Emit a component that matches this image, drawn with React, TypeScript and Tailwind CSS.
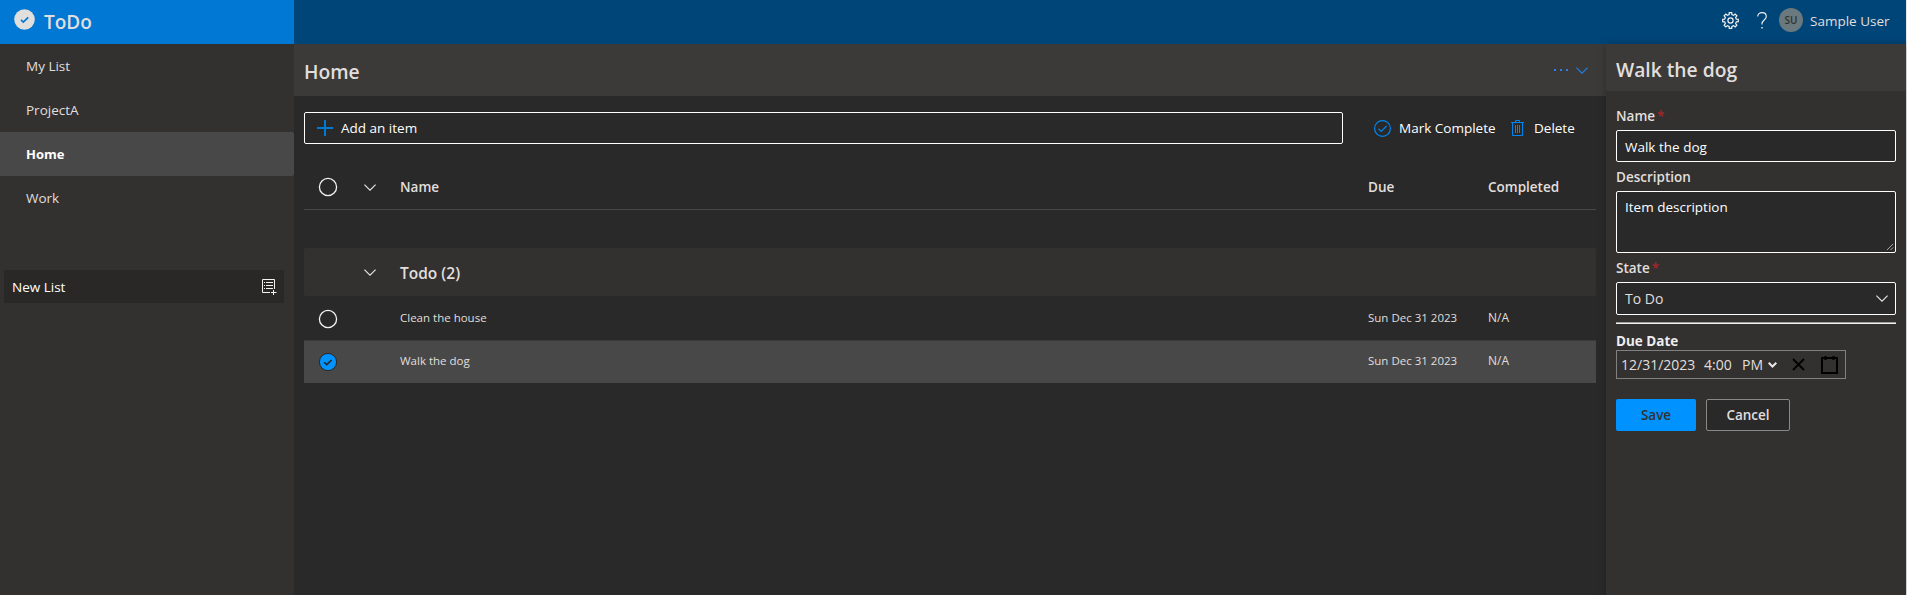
import type { ReactNode } from "react";

const lists = ["My List", "ProjectA", "Home", "Work"];

const items = [
  { name: "Clean the house", due: "Sun Dec 31 2023", completed: "N/A", selected: false },
  { name: "Walk the dog", due: "Sun Dec 31 2023", completed: "N/A", selected: true },
];

function gearPath(teeth: number, outer: number, inner: number) {
  const step = (Math.PI * 2) / teeth;
  const points: string[] = [];
  for (let i = 0; i < teeth; i++) {
    const a = i * step - Math.PI / 2;
    [
      [a - step * 0.3, inner],
      [a - step * 0.2, outer],
      [a + step * 0.2, outer],
      [a + step * 0.3, inner],
    ].forEach(([angle, r]) => {
      points.push(`${(8.5 + r * Math.cos(angle)).toFixed(2)} ${(8.5 + r * Math.sin(angle)).toFixed(2)}`);
    });
  }
  return `M${points.join("L")}Z`;
}

function GearIcon() {
  return (
    <svg width="17" height="17" viewBox="0 0 17 17" fill="none" stroke="#f3f2f1" strokeWidth="1.2">
      <path d={gearPath(8, 7.9, 6)} />
      <circle cx="8.5" cy="8.5" r="2.6" />
    </svg>
  );
}

function HelpIcon() {
  return (
    <svg width="10" height="17" viewBox="0 0 10 17" fill="none" stroke="#f3f2f1" strokeWidth="1.1">
      <path d="M0.7 4.6C0.7 2.3 2.6 0.6 5 0.6s4.3 1.6 4.3 3.9c0 3.3-4.3 3.7-4.3 7.1v1" />
      <path d="M5 15v1.6" strokeWidth="1.4" />
    </svg>
  );
}

function Chevron({ color = "#e1dfdd", width = 12, height = 7 }: { color?: string; width?: number; height?: number }) {
  return (
    <svg width={width} height={height} viewBox="0 0 12 7" fill="none" stroke={color} strokeWidth="1.2">
      <path d="M0.4 0.6L6 6.2L11.6 0.6" />
    </svg>
  );
}

function NewListIcon() {
  return (
    <svg width="15" height="16" viewBox="0 0 15 16" fill="none" stroke="#f3f2f1">
      <path d="M8 13.5H0.5V0.5H12.5V10" />
      <path d="M2 3.5h1M2 6.5h1M2 9.5h1M4 3.5h7M4 6.5h7M4 9.5h7" />
      <path d="M9 13.5h5.5M11.5 11v5" />
    </svg>
  );
}

function SelectCircle({ checked = false }: { checked?: boolean }) {
  return (
    <svg width="20" height="20" viewBox="0 0 20 20" fill="none">
      {checked ? (
        <>
          <circle cx="10" cy="10" r="8.6" fill="#0092ff" stroke="#292827" strokeWidth="1" />
          <path d="M6.2 10.4L8.8 12.6L13.6 8" stroke="#292827" strokeWidth="1.6" />
        </>
      ) : (
        <circle cx="10" cy="10" r="8.6" stroke="#f3f2f1" strokeWidth="1.3" />
      )}
    </svg>
  );
}

function Label({ children, required }: { children: ReactNode; required?: boolean }) {
  return (
    <div className="flex h-[20px] items-center text-[13.5px] font-semibold leading-[20px]">
      <span>{children}</span>
      {required && <span className="pl-[2px] text-[#a4262c]">*</span>}
    </div>
  );
}

function Header() {
  return (
    <header className="flex h-11 shrink-0 bg-[#004578]">
      <div className="flex w-[294px] items-center bg-[#0078d4] pl-[14px]">
        <svg width="21" height="21" viewBox="0 0 21 21" fill="none" className="mb-[5px]">
          <circle cx="10.5" cy="10.5" r="10.3" fill="#e1dfdd" />
          <path d="M7 10.8L9.3 13L14.2 8.3" stroke="#0078d4" strokeWidth="1.7" />
        </svg>
        <span className="pl-[9px] text-[19px] font-semibold leading-[44px] text-[#e1dfdd]">ToDo</span>
      </div>
      <div className="flex grow items-center justify-end pb-1 pr-[17px]">
        <GearIcon />
        <div className="pl-[18px]">
          <HelpIcon />
        </div>
        <div className="ml-[12px] flex size-6 items-center justify-center rounded-full bg-[#69797e] text-[10px] font-semibold text-[#323130]">
          SU
        </div>
        <span className="w-[86px] whitespace-nowrap pl-[7px] pt-[2px] text-[13.5px]">Sample User</span>
      </div>
    </header>
  );
}

function Sidebar() {
  return (
    <nav className="w-[294px] shrink-0 bg-[#323130] text-[13.5px]">
      {lists.map((name) => (
        <div
          key={name}
          className={
            name === "Home"
              ? "h-11 rounded-r-[2px] bg-[#484848] pl-[26px] text-[13px] font-bold leading-[44px] text-white"
              : "h-11 pl-[26px] leading-[44px]"
          }
        >
          {name}
        </div>
      ))}
      <div className="ml-1 mt-[50px] flex h-[33px] w-[280px] items-center justify-between rounded-[2px] bg-[#292827] pl-2 pr-[7px]">
        <span className="pt-px text-white">New List</span>
        <NewListIcon />
      </div>
    </nav>
  );
}

function Main() {
  return (
    <main className="flex min-w-0 grow flex-col bg-[#292929]">
      <div className="flex h-[52px] items-center justify-between bg-[#3b3a39] pl-[10px] pr-[18px]">
        <h1 className="pt-[4px] text-[19.25px] font-semibold leading-[28px]">Home</h1>
        <div className="flex items-center gap-[8px]">
          <svg width="14" height="2" viewBox="0 0 14 2" fill="#2f7fe6">
            <path d="M0 0h2v2H0zM6 0h2v2H6zM12 0h2v2h-2z" />
          </svg>
          <Chevron color="#1f80e0" />
        </div>
      </div>

      <div className="flex items-center pl-[10px] pt-4 text-[13.5px] text-white">
        <div className="flex h-8 w-[1039px] items-center rounded-[2px] border border-white pl-3">
          <svg width="16" height="16" viewBox="0 0 16 16" stroke="#0078d4" strokeWidth="2">
            <path d="M8 0v16M0 8h16" />
          </svg>
          <span className="pl-2">Add an item</span>
        </div>
        <div className="flex shrink-0 items-center pl-[31px]">
          <svg width="17" height="17" viewBox="0 0 17 17" fill="none" stroke="#0086f0" strokeWidth="1.2">
            <circle cx="8.5" cy="8.5" r="7.9" />
            <path d="M4.5 8.8L7.2 11.4L12.6 6" />
          </svg>
          <span className="w-[120px] shrink-0 whitespace-nowrap pl-2">Mark Complete</span>
          <svg width="13" height="16" viewBox="0 0 13 16" fill="none" stroke="#0086f0">
            <path d="M0 2.5h13M4.5 2V0.5h4V2M1.5 2.5v13h10v-13M4.5 5v8M6.5 5v8M8.5 5v8" />
          </svg>
          <span className="pl-[10px]">Delete</span>
        </div>
      </div>

      <div className="ml-[10px] mt-[22px] w-[1292px]">
        <div className="grid h-[44px] grid-cols-[48px_48px_968px_120px_108px] items-center border-b border-[#484848] text-[13.5px] font-semibold">
          <div className="pb-[2px] pl-[14px]">
            <SelectCircle />
          </div>
          <div className="pl-3">
            <Chevron />
          </div>
          <div>Name</div>
          <div>Due</div>
          <div>Completed</div>
        </div>
        <div className="mt-[38px] grid h-12 grid-cols-[48px_48px_968px] items-center rounded-[2px] bg-[#323130]">
          <div />
          <div className="pl-3">
            <Chevron />
          </div>
          <div className="pt-[3px] text-[15.5px] font-semibold">Todo (2)</div>
        </div>
        {items.map((item) => (
          <div
            key={item.name}
            className={
              item.selected
                ? "grid h-[43px] grid-cols-[96px_968px_120px_108px] items-center border-t border-[#3b3a39] bg-[#484848] pb-[2px] text-[11.5px]"
                : "grid h-11 grid-cols-[96px_968px_120px_108px] items-center text-[11.5px]"
            }
          >
            <div className="pl-[14px] pt-[2px]">
              <SelectCircle checked={item.selected} />
            </div>
            <div>{item.name}</div>
            <div>{item.due}</div>
            <div className="text-[12px]">{item.completed}</div>
          </div>
        ))}
      </div>
    </main>
  );
}

function Details() {
  return (
    <aside className="w-[300px] shrink-0 bg-[#323130] shadow-[0_0_7px_rgba(0,0,0,0.25)]">
      <h2 className="h-[47px] bg-[#3b3a39] pl-[10px] text-[19.25px] font-semibold leading-[51px]">Walk the dog</h2>
      <div className="flex w-[300px] flex-col px-[10px] pt-[15px]">
        <Label required>Name</Label>
        <div className="mt-1 h-8 rounded-[2px] border border-white bg-[#292929] pl-2 text-[13.5px] leading-[32px] text-white">
          Walk the dog
        </div>
        <div className="mt-[5px]">
          <Label>Description</Label>
        </div>
        <div className="mt-1 flex h-[62px] justify-between rounded-[2px] border border-white bg-[#292929] pl-2 pt-[5px] text-[13.5px] leading-[20px] text-white">
          <span>Item description</span>
          <svg width="9" height="9" viewBox="0 0 9 9" stroke="#c8c6c4" strokeWidth="0.9" className="self-end pb-px pr-px">
            <path d="M1 8L8 1M5 8L8 5" />
          </svg>
        </div>
        <div className="mt-[5px]">
          <Label required>State</Label>
        </div>
        <div className="mt-1 flex h-[33px] items-center justify-between rounded-[2px] border border-white bg-[#292929] pl-2 pr-[7px]">
          <span className="text-[14px]">To Do</span>
          <Chevron />
        </div>
        <div className="mt-[7px] h-[2px] border-t border-[#a19f9d] bg-[#f3f2f1]" />
        <div className="mt-[8px] text-[13.5px] font-bold leading-[18px] text-[#eeeeee]">Due Date</div>
        <div className="flex h-[29px] w-[230px] items-center border border-[#808080] pl-1 text-[14px]">
          <span className="w-[83px] whitespace-nowrap">12/31/2023</span>
          <span className="w-[38px]">4:00</span>
          <span className="w-[26px]">PM</span>
          <svg width="9" height="6" viewBox="0 0 9 6" fill="none" stroke="#e8e8e8" strokeWidth="2">
            <path d="M0.7 0.8L4.5 4.5L8.3 0.8" />
          </svg>
          <svg width="13" height="13" viewBox="0 0 13 13" stroke="#000" strokeWidth="1.8" className="ml-[15px]">
            <path d="M1 1L12 12M12 1L1 12" />
          </svg>
          <svg width="17" height="18" viewBox="0 0 17 18" fill="none" stroke="#000" strokeWidth="2" className="ml-[16px]">
            <path d="M1 2h15v15H1zM4.5 0v4M12.5 0v4" />
          </svg>
        </div>
        <div className="mt-5 flex gap-[10px] text-[13.5px] font-semibold">
          <div className="flex h-8 w-20 items-center justify-center rounded-[2px] bg-[#0092ff] text-[#323130]">Save</div>
          <div className="flex h-8 w-[84px] items-center justify-center rounded-[2px] border border-[#8a8886] bg-[#292929]">
            Cancel
          </div>
        </div>
      </div>
    </aside>
  );
}

export default function App() {
  return (
    <div className="h-[595px] w-[1907px] overflow-hidden bg-[#e8e8e8] pr-px font-['Open_Sans','Noto_Sans',sans-serif] text-[#e1dfdd]">
      <div className="flex h-full flex-col">
        <Header />
        <div className="flex grow">
          <Sidebar />
          <Main />
          <Details />
        </div>
      </div>
    </div>
  );
}
